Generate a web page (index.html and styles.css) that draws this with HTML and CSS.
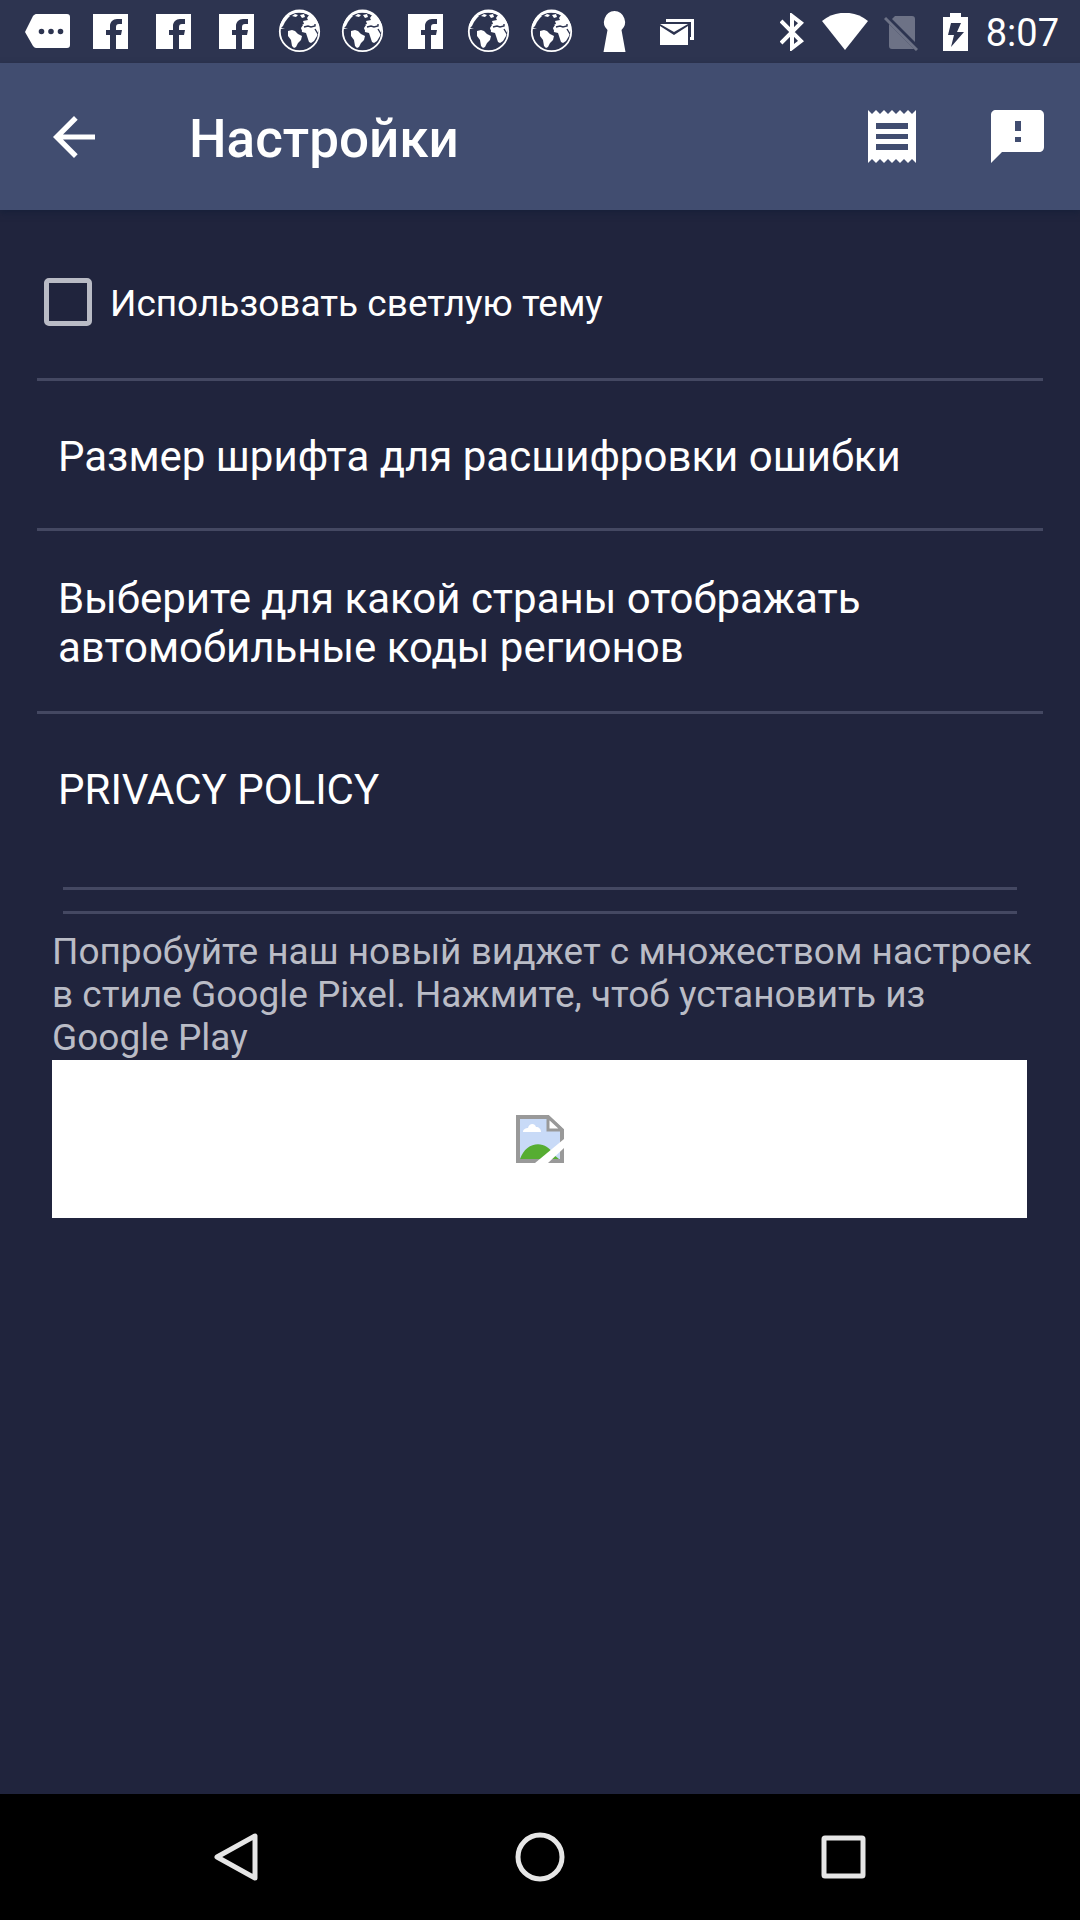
FILE: index.html
```html
<!DOCTYPE html>
<html lang="ru">
<head>
<meta charset="utf-8">
<meta name="viewport" content="width=device-width, initial-scale=1">
<title>Настройки</title>
<link rel="stylesheet" href="styles.css">
</head>
<body>
<svg class="sprite" aria-hidden="true">
  <symbol id="facebook" viewBox="0 0 63 63">
    <path d="M14 14h35v35H37V35h5l1-5h-6v-3c0-2 1-3 3-3h3v-5h-5c-4 0-7 3-7 7v4h-4v5h4v14H14z"/>
  </symbol>
  <symbol id="globe" viewBox="0 0 63 63">
    <path d="M12 29a19.500 19.500 0 0 1 39 0l-2 7-3 5-3 2-2-1-2-6-1-3-4-1-1-4 2-3-2-2-5 5-8 1z"/>
    <path fill="#2d3450" d="M20 15l4-2 6-1 6 1 5 2-2 3 1 2-5 1 1 3-4 1-2 3 4 2-2 5-8-1-2-3-5-2-4-1 2-2 2-4 3-4 2-2z"/>
    <path fill="none" stroke="#2d3450" stroke-width="1.400" d="M36 27l4-1 3 1 4-1v-2M47 29l3 5"/>
    <path d="M24 16l3-2 3 1-2 2zM32 15l4-1 1 3-3 1z"/>
    <path d="M20 31l4-1 3 1 3 3 4 2-1 4-3 3-2 4-2 1-2-2-1-6-3-4z"/>
    <circle cx="31.500" cy="31.500" r="19.700" fill="none" stroke="currentColor" stroke-width="1.800"/>
  </symbol>
</svg>

<div class="screen">
  <div class="status">
    <div class="status-left">
      <svg viewBox="0 0 63 63"><path fill-rule="evenodd" d="M20 14h31c2 0 3 1 3 3v28c0 2-1 3-3 3H20c-1 0-2-1-3-2L9 32l8-16c1-1 2-2 3-2zM25.500 28.700a2.800 2.800 0 1 0 0 5.600a2.800 2.800 0 1 0 0-5.600zM35 28.700a2.800 2.800 0 1 0 0 5.600a2.800 2.800 0 1 0 0-5.600zM44.500 28.700a2.800 2.800 0 1 0 0 5.600a2.800 2.800 0 1 0 0-5.600z"/></svg>
      <svg><use href="#facebook"/></svg>
      <svg><use href="#facebook"/></svg>
      <svg><use href="#facebook"/></svg>
      <svg><use href="#globe"/></svg>
      <svg><use href="#globe"/></svg>
      <svg><use href="#facebook"/></svg>
      <svg><use href="#globe"/></svg>
      <svg><use href="#globe"/></svg>
      <svg viewBox="0 0 63 63"><path d="M31.500 11a11 11 0 0 1 7 19l4 22h-22l4-22a11 11 0 0 1 7-19z"/></svg>
      <svg viewBox="0 0 63 63"><path d="M20 22v-3h28v21h-4v-3h1V22zM14 26l14 9 14-9v19H14zM14 24h28l-14 8z"/></svg>
    </div>
    <div class="status-right">
      <svg class="bluetooth" viewBox="0 0 24 38"><path d="M1 8l20 20-9 7V3l9 7L1 30" fill="none" stroke="currentColor" stroke-width="4"/></svg>
      <svg class="wifi" viewBox="0 0 46 38"><path d="M0 8c13-11 33-11 46 0L23 37z"/></svg>
      <svg class="sim" viewBox="0 0 34 38"><path d="M11 3h17c2 0 3 1 3 3v23L8 6zM5 11l25 25H8c-2 0-3-1-3-3z"/><path d="M1 5l32 32" fill="none" stroke="currentColor" stroke-width="3"/></svg>
      <svg class="battery" viewBox="0 0 25 38"><path fill-rule="evenodd" d="M7 0h11v4h7v34H0V4h7zM8 10L5 22h6l-3 12 13-15h-7l4-9z"/></svg>
      <time>8:07</time>
    </div>
  </div>

  <header class="appbar">
    <button type="button" aria-label="Назад"><svg class="back" viewBox="0 0 42 42"><path d="M42 18.400v5.200H10l14.700 14.700L21 42 0 21 21 0l3.700 3.700L10 18.400z"/></svg></button>
    <h1>Настройки</h1>
    <button type="button" aria-label="Список"><svg class="receipt" viewBox="0 0 48 53"><path fill-rule="evenodd" d="M0 0l4 4 4-4 4 4 4-4 4 4 4-4 4 4 4-4 4 4 4-4 4 4 4-4v53l-4-4-4 4-4-4-4 4-4-4-4 4-4-4-4 4-4-4-4 4-4-4-4 4zM8 13v6h32v-6zM8 24v5h32v-5zM8 34v6h32v-6z"/></svg></button>
    <button type="button" aria-label="Отзыв"><svg class="feedback" viewBox="0 0 53 53"><path fill-rule="evenodd" d="M5 0h43c3 0 5 2 5 5v32c0 3-2 5-5 5H11L0 53V5c0-3 2-5 5-5zM24 11v10h6V11zM24 27v5h6v-5z"/></svg></button>
  </header>

  <main>
    <label class="theme"><input type="checkbox"><span>Использовать светлую тему</span></label>
    <button type="button" class="row">Размер шрифта для расшифровки ошибки</button>
    <button type="button" class="row">Выберите для какой страны отображать автомобильные коды регионов</button>
    <a href="#privacy" class="row last">PRIVACY POLICY</a>
    <div class="rules"></div>
    <a href="#widget" class="promo">
      <span>Попробуйте наш новый виджет с множеством настроек в стиле Google Pixel. Нажмите, чтоб установить из Google Play</span>
      <span class="banner">
        <svg viewBox="0 0 48 48" role="img" aria-label="Google Play">
          <path d="M2 2h30l14 13v31H2z" fill="#c8daf7" stroke="#999" stroke-width="4"/>
          <path d="M7 17c0-3 3-4 5-4 1-5 7-5 8-1 3 0 5 2 5 5z" fill="#fff"/>
          <path d="M4 44c6-18 26-20 34-4l5 4z" fill="#56ad32"/>
          <path d="M32 2v13h14z" fill="#fff" stroke="#999" stroke-width="3"/>
          <path d="M19 48L48 24v9L32 48z" fill="#fff"/>
        </svg>
      </span>
    </a>
  </main>

  <nav class="navbar">
    <button type="button" aria-label="Назад"><svg viewBox="0 0 50 50"><path d="M43 4v42L5 25z"/></svg></button>
    <button type="button" aria-label="Домой"><svg viewBox="0 0 50 50"><circle cx="25" cy="25" r="22"/></svg></button>
    <button type="button" aria-label="Обзор"><svg viewBox="0 0 50 50"><rect x="6" y="6" width="39" height="38" rx="1"/></svg></button>
  </nav>
</div>
</body>
</html>
```
FILE: styles.css
```css
* {
  box-sizing: border-box;
}

body {
  margin: 0;
  background: #20243d;
  color: #fff;
  font-family: Roboto, "Noto Sans", sans-serif;
}

button {
  padding: 0;
  border: 0;
  background: none;
  color: inherit;
  font: inherit;
  text-align: left;
}

a {
  color: inherit;
  text-decoration: none;
}

svg {
  display: block;
  fill: currentColor;
}

.sprite {
  position: absolute;
  width: 0;
  height: 0;
}

.screen {
  display: flex;
  flex-direction: column;
  min-height: 100vh;
}

.status {
  display: flex;
  justify-content: space-between;
  height: 63px;
  padding: 0 21px 0 16px;
  background: #2d3450;
}

.status-left {
  display: flex;
}

.status-left svg {
  width: 63px;
  height: 63px;
}

.status-right {
  display: flex;
  align-items: center;
}

.status-right svg {
  height: 38px;
}

.bluetooth {
  width: 24px;
  margin-right: 18px;
}

.wifi {
  width: 46px;
  margin-right: 16px;
}

.sim {
  width: 34px;
  margin-right: 25px;
  color: #6d7286;
}

.battery {
  width: 25px;
  margin-right: 18px;
}

.status time {
  padding-top: 3px;
  font-size: 38px;
  line-height: 44px;
}

.appbar {
  display: flex;
  align-items: center;
  height: 147px;
  padding: 0 36px 0 53px;
  background: #414d70;
  box-shadow: 0 3px 6px #17203a;
}

.appbar h1 {
  flex: 1;
  margin: 4px 0 0 94px;
  font-size: 53px;
  line-height: 62px;
  font-weight: 500;
}

.back {
  width: 42px;
  height: 42px;
}

.receipt {
  width: 48px;
  height: 53px;
}

.feedback {
  width: 53px;
  height: 53px;
  margin-left: 75px;
}

main {
  flex: 1;
  display: flex;
  flex-direction: column;
  padding: 0 37px;
}

.theme {
  display: flex;
  align-items: center;
  gap: 18px;
  padding: 68px 0 52px 7px;
  border-bottom: 3px solid #444862;
  font-size: 37px;
  line-height: 44px;
}

.theme span {
  padding-top: 4px;
}

.theme input {
  appearance: none;
  width: 48px;
  height: 48px;
  margin: 0;
  border: 5px solid #b9bbc5;
  border-radius: 5px;
}

.row {
  display: flex;
  align-items: center;
  min-height: 150px;
  padding: 43px 21px 39px;
  border-bottom: 3px solid #444862;
  font-size: 42px;
  line-height: 49px;
}

.row.last {
  min-height: 147px;
  border-bottom: 0;
}

.rules {
  height: 27px;
  margin: 26px 26px 16px;
  border: solid #444862;
  border-width: 3px 0;
}

.promo {
  margin-left: 15px;
  color: #babcc6;
  font-size: 37px;
  line-height: 43px;
}

.banner {
  display: flex;
  align-items: center;
  justify-content: center;
  height: 158px;
  margin: 1px 16px 0 0;
  background: #fff;
}

.banner svg {
  width: 48px;
  height: 48px;
}

.navbar {
  display: grid;
  grid-template-columns: repeat(3, 1fr);
  height: 126px;
  padding: 0 85px;
  background: #000;
}

.navbar button {
  display: flex;
  align-items: center;
  justify-content: center;
}

.navbar svg {
  width: 50px;
  height: 50px;
  fill: none;
  stroke: #e6e6e6;
  stroke-width: 5px;
  stroke-linejoin: round;
}
```
